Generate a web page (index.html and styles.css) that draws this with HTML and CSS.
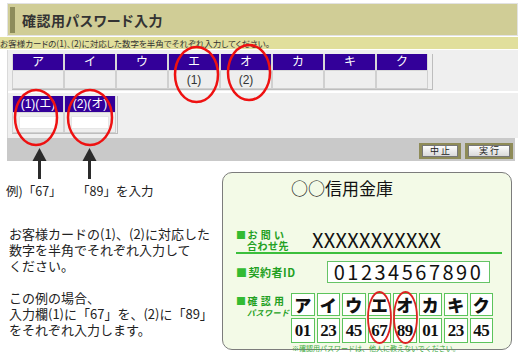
FILE: index.html
```html
<!DOCTYPE html>
<html lang="ja">
<head>
    <meta charset="UTF-8">
    <title>確認用パスワード入力</title>
    <link rel="stylesheet" href="styles.css">
</head>
<body>
<div class="page">
    <div class="panel">
        <div class="head"><span class="accent"></span><h1>確認用パスワード入力</h1></div>
        <div class="guide">お客様カードの(1)、(2)に対応した数字を半角でそれぞれ入力してください。</div>
        <div class="main">
            <div class="upper">
                <div class="kana-grid cols8">
                    <div class="th">ア</div><div class="th">イ</div><div class="th">ウ</div><div class="th">エ</div>
                    <div class="th">オ</div><div class="th">カ</div><div class="th">キ</div><div class="th">ク</div>
                    <div class="td"></div><div class="td"></div><div class="td"></div><div class="td">(1)</div>
                    <div class="td">(2)</div><div class="td"></div><div class="td"></div><div class="td"></div>
                </div>
            </div>
            <div class="lower">
                <div class="kana-grid cols2">
                    <div class="th">(1)(エ)</div><div class="th">(2)(オ)</div>
                    <div class="td tall"><span class="box"></span></div><div class="td tall"><span class="box"></span></div>
                </div>
            </div>
        </div>
        <div class="foot">
            <span class="btn w42"><span>中 止</span></span>
            <span class="btn w48"><span>実 行</span></span>
        </div>
    </div>

    <div class="bottom">
        <div class="explain">
            <div class="labels">
                <span class="lab1">例)「67」</span>
                <span class="lab2">「89」を入力</span>
            </div>
            <p>お客様カードの(1)、(2)に対応した<br>数字を半角でそれぞれ入力して<br>ください。</p>
            <p>この例の場合、<br>入力欄(1)に「67」を、(2)に「89」<br>をそれぞれ入力します。</p>
        </div>

        <div class="card">
            <div class="bank">○○信用金庫</div>
            <div class="crow contact">
                <div class="clabel"><span class="sq">■</span>お 問 い<br><span class="ind">合わせ先</span></div>
                <div class="xx">XXXXXXXXXXX</div>
            </div>
            <div class="crow idrow">
                <div class="clabel"><span class="sq">■</span>契約者ID</div>
                <div class="idbox">01234567890</div>
            </div>
            <div class="crow pwrow">
                <div class="clabel"><span class="sq">■</span>確 認 用<br><span class="pw">パスワード</span></div>
                <div class="cgrid">
                    <div class="ck">ア</div><div class="ck">イ</div><div class="ck">ウ</div><div class="ck">エ</div>
                    <div class="ck">オ</div><div class="ck">カ</div><div class="ck">キ</div><div class="ck">ク</div>
                    <div class="cn">01</div><div class="cn">23</div><div class="cn">45</div><div class="cn">67</div>
                    <div class="cn">89</div><div class="cn">01</div><div class="cn">23</div><div class="cn">45</div>
                </div>
            </div>
            <div class="note">※確認用パスワードは、他人に教えないでください。</div>
        </div>
    </div>

    <!-- annotations drawn over the screen -->
    <svg class="marks" width="522" height="360" viewBox="0 0 522 360">
        <g fill="none" stroke="#ee1111" stroke-width="2.5">
            <ellipse cx="196.5" cy="74.5" rx="21.5" ry="27.5"/>
            <ellipse cx="249" cy="72.5" rx="21" ry="27.5"/>
            <ellipse cx="36" cy="117.5" rx="21" ry="27.5"/>
            <ellipse cx="90" cy="117.5" rx="22" ry="27.5"/>
        </g>
        <g fill="none" stroke="#dd2222" stroke-width="1.8">
            <ellipse cx="379.5" cy="317.5" rx="11.5" ry="25.5"/>
            <ellipse cx="405.5" cy="317.5" rx="11.5" ry="25.5"/>
        </g>
        <g fill="#2b2b2b">
            <polygon points="39.5,148 32.5,161 46.5,161"/>
            <rect x="38" y="160" width="3" height="19"/>
            <polygon points="89.5,148 82.5,161 96.5,161"/>
            <rect x="88" y="160" width="3" height="19"/>
        </g>
    </svg>
</div>
</body>
</html>
```

FILE: styles.css
```css
body { margin: 0; background: #fff; color: #222; font-family: "Noto Sans CJK JP", "Liberation Sans", sans-serif; }
.page { position: relative; width: 522px; height: 360px; overflow: hidden; }

.panel { width: 518px; padding-top: 3px; }
.head { display: flex; align-items: center; height: 31px; margin-left: 7px; background: #d0cd96; border: 1px solid #e2e2e2; }
.accent { width: 5px; height: 26px; margin-left: 2px; background: #8d8c5b; }
.head h1 { margin: 0 0 0 7px; font-size: 14px; line-height: 18px; font-weight: bold; color: #333; font-feature-settings: "palt"; letter-spacing: 0.5px; }
.guide { height: 12px; margin-top: 1px; background: #e1df9c; font-size: 8.5px; line-height: 12px; color: #333; font-feature-settings: "palt"; white-space: nowrap; overflow: hidden; border-bottom: 1px solid #fff; }

.main { margin-left: 7px; width: 510px; background: #efefef; border-left: 1px solid #dadada; }
.upper { padding: 4px 0 1px 4px; border-bottom: 2px solid #fff; }
.lower { padding: 3px 0 4px 4px; }
.kana-grid { display: grid; grid-template-columns: repeat(8, 52px); width: 420px; border-right: 1px solid #bdbdbd; border-bottom: 1px solid #bdbdbd; font-family: "Liberation Sans", "Noto Sans CJK JP", sans-serif; }
.kana-grid.cols2 { grid-template-columns: repeat(2, 52px); width: 105px; }
.th, .td { display: flex; align-items: center; justify-content: center; border: 1px solid #d0d0d0; border-width: 0 1px 1px 1px; font-size: 12px; line-height: 14px; }
.th { height: 16px; background: #330099; color: #fff; border-color: #d8d8d8; }
.td { height: 17px; background: #eeeeee; color: #333; }
.td.tall { height: 19px; }
.box { width: 36px; height: 11px; background: #fff; border: 1px solid #e6e6e6; }

.foot { display: flex; justify-content: flex-end; gap: 4px; margin-left: 7px; width: 508px; height: 23px; padding: 5px 2px 0 0; box-sizing: border-box; background: #c9c9c9; }
.btn { display: flex; height: 16px; padding: 2px 3px; box-sizing: border-box; background: #8e8b58; }
.btn span { flex: 1; display: flex; align-items: center; justify-content: center; background: linear-gradient(#fdfdfd, #d9d9d9); border: 1px solid #777; font-size: 9px; line-height: 10px; color: #222; }
.w42 { width: 42px; }
.w48 { width: 48px; }

.bottom { display: flex; }
.explain { width: 222px; flex: none; font-size: 13px; line-height: 16px; color: #222; }
.labels { display: flex; margin-top: 22px; font-size: 12.5px; }
.lab1 { margin-left: 6px; width: 71px; }
.explain p { margin: 27px 0 0 9px; }
.explain p + p { margin-top: 16px; }

.card { width: 288px; height: 176px; margin-top: 11px; border: 1px solid #7c7c7c; border-radius: 10px; background: #f3fae7; }
.bank { padding: 5px 0 0 68px; font-size: 17px; line-height: 20px; color: #111; }
.crow { display: flex; align-items: center; margin: 0 9px 0 13px; }
.clabel { font-size: 10px; line-height: 11px; font-weight: bold; color: #22a022; letter-spacing: 0.5px; white-space: nowrap; }
.sq { color: #33bb33; margin-right: 1px; }
.ind { padding-left: 11px; }
.contact { margin-top: 30px; height: 24px; border-bottom: 2px solid #3cbf3c; }
.contact .clabel { width: 76px; flex: none; }
.xx { font-size: 20px; line-height: 22px; letter-spacing: 0.3px; color: #111; }
.idrow { margin-top: 7px; height: 22px; }
.idrow .clabel { width: 91px; flex: none; font-size: 11px; }
.idbox { width: 163px; height: 22px; box-sizing: border-box; border: 1px solid #66c466; background: #fff; font-size: 20px; line-height: 20px; letter-spacing: 2.5px; text-align: center; color: #111; }
.pwrow { margin-top: 10px; align-items: flex-start; }
.pwrow .clabel { width: 55px; flex: none; padding-top: 2px; }
.pw { padding-left: 11px; font-size: 8px; font-style: italic; }
.cgrid { display: grid; grid-template-columns: repeat(8, 1fr); grid-template-rows: 23px 25px; gap: 2px; width: 202px; }
.ck, .cn { display: flex; align-items: center; justify-content: center; border: 1px solid #5cc45c; background: #fff; color: #111; }
.ck { font-size: 17px; line-height: 20px; font-weight: 900; }
.cn { font-family: "Liberation Serif", serif; font-size: 17px; line-height: 20px; font-weight: bold; letter-spacing: -0.5px; }
.note { margin: 1px 0 0 69px; font-size: 7px; line-height: 8px; color: #44aa44; white-space: nowrap; }

.marks { position: absolute; left: 0; top: 0; pointer-events: none; }
```
